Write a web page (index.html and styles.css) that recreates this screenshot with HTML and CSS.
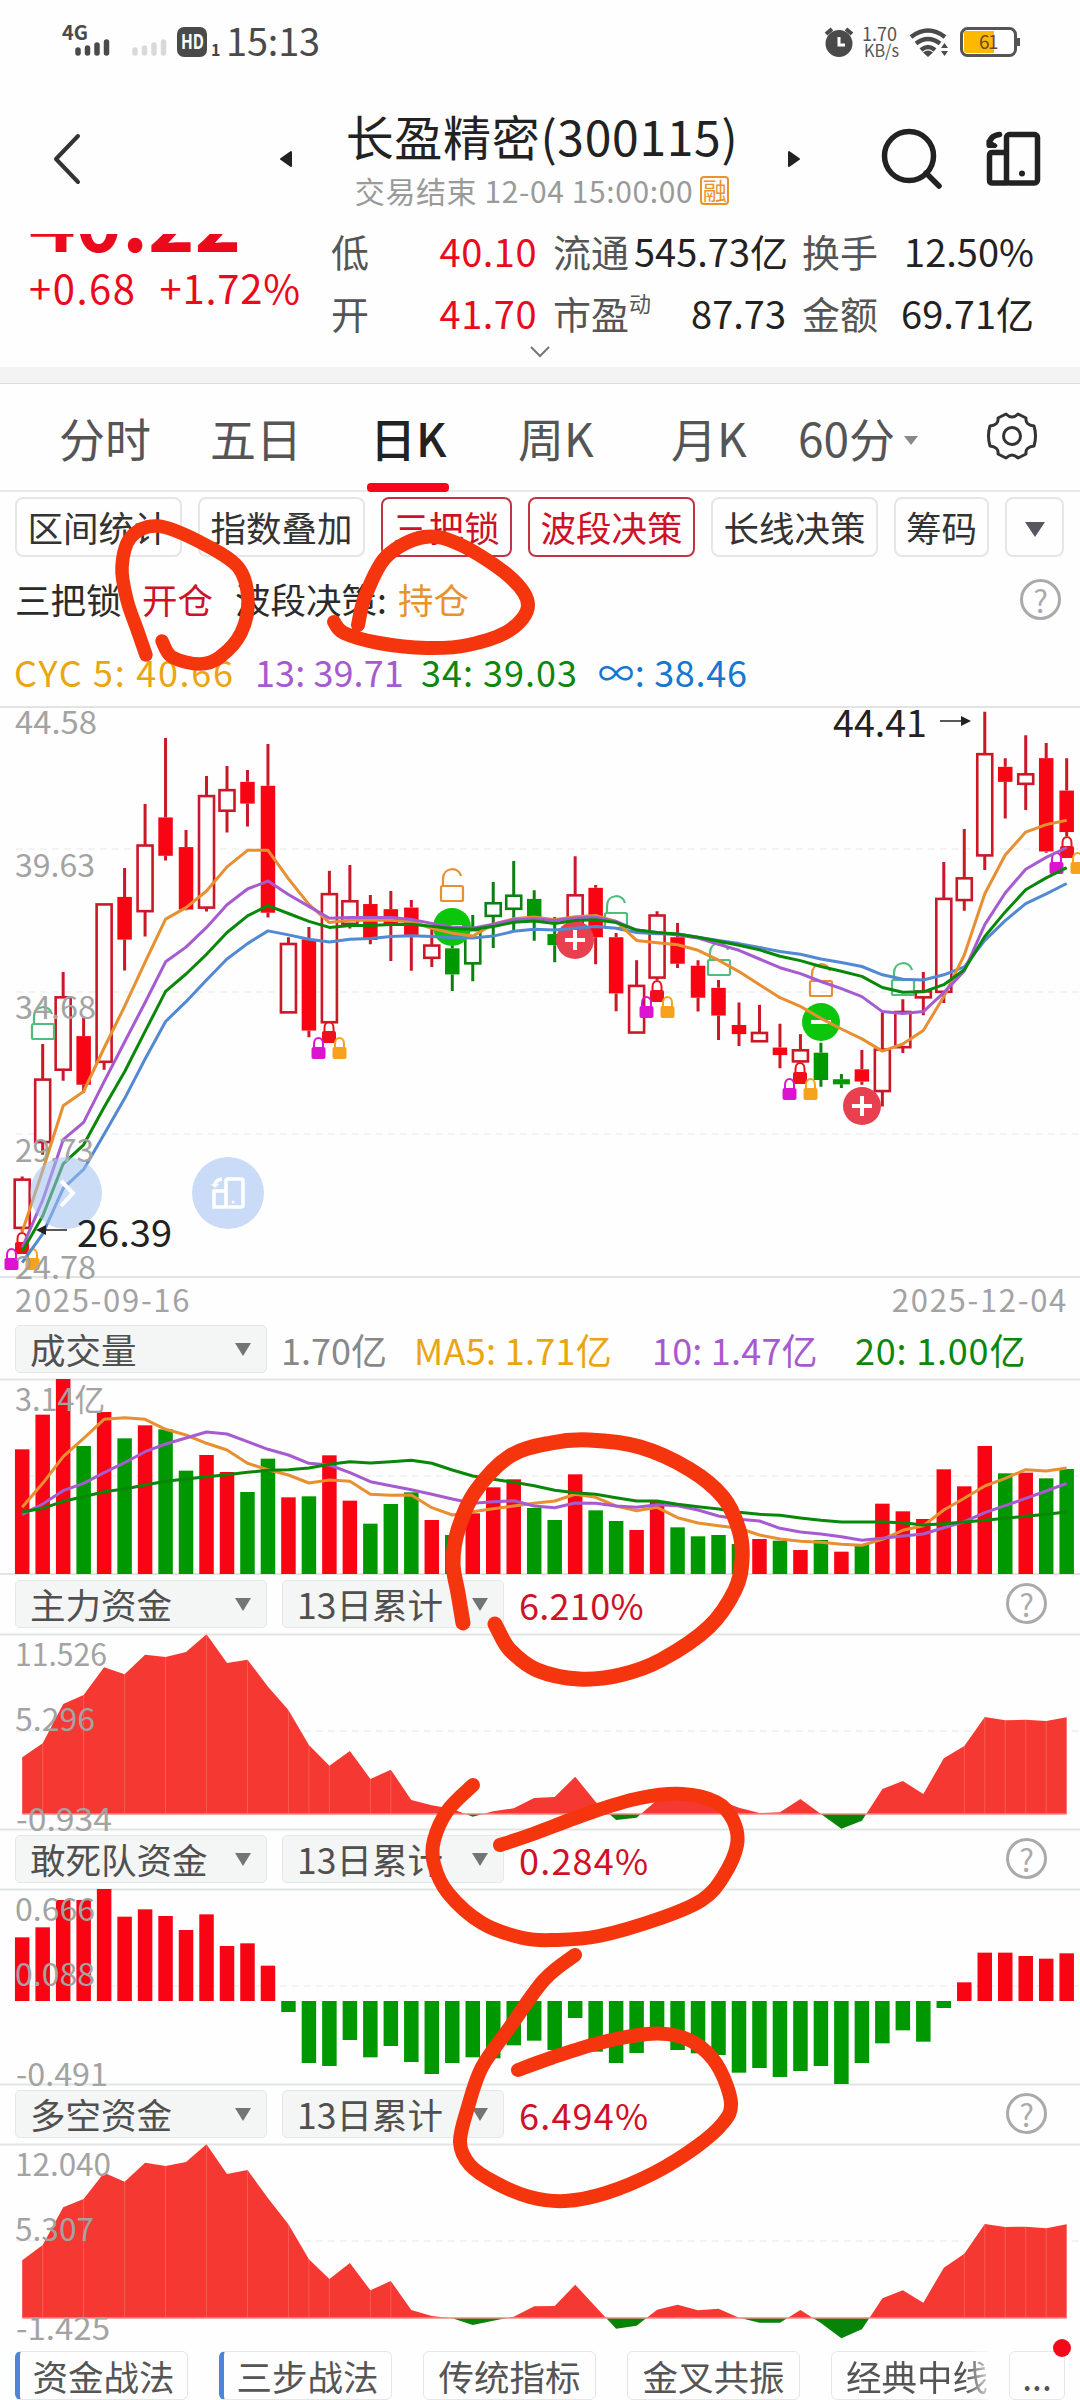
FILE: index.html
```html
<!DOCTYPE html>
<html lang="zh-CN">
<head>
<meta charset="utf-8">
<title>长盈精密(300115)</title>
<link rel="stylesheet" href="styles.css">
</head>
<body>
<div class="screen">
  <div class="status">
    <svg class="status-left" width="226" height="80" viewBox="0 0 226 80">
      <text x="62" y="40" class="net" textLength="26" lengthAdjust="spacingAndGlyphs">4G</text>
      <g stroke="#4a4a4a" stroke-width="5.5" stroke-linecap="round"><path d="M78 50v3M87.5 48v5M97 45v8M106.500 42v11"/></g>
      <g stroke="#d9d9d9" stroke-width="5.5" stroke-linecap="round"><path d="M135 50v3M144.500 48v5M154 45v8M163.500 42v11"/></g>
      <rect x="177" y="27" width="30" height="30" rx="7" fill="#4a4a4a"/>
      <text x="181" y="49" class="hd" textLength="23" lengthAdjust="spacingAndGlyphs">HD</text>
      <text x="211" y="56" class="sim">1</text>
    </svg>
    <span class="clock">15:13</span>
    <svg class="status-right" width="220" height="80" viewBox="820 0 220 80">
      <circle cx="839" cy="43.500" r="13.500" fill="#4a4a4a"/><path d="M826 34l6-5M852 34l-6-5" stroke="#4a4a4a" stroke-width="4"/><path d="M839 37v8h6" stroke="#fff" stroke-width="3" fill="none"/>
      <text x="862" y="41" class="speed" textLength="35" lengthAdjust="spacingAndGlyphs">1.70</text>
      <text x="864" y="57" class="speed kb" textLength="35" lengthAdjust="spacingAndGlyphs">KB/s</text>
      <g fill="none" stroke="#4a4a4a" stroke-width="4.500"><path d="M911 37q17-13 34 0M916 43.500q12-9 24 0M921 50q7-6 14 0"/></g>
      <path d="M923 52.500q5-4 10 0l-5 4.500zM941 48l3.500-5 3.500 5zM941 51l3.500 5 3.500-5z" fill="#4a4a4a"/>
      <rect x="961.500" y="28.500" width="54" height="27" rx="6" fill="#fff" stroke="#555" stroke-width="3"/>
      <path d="M964 31h30v22h-27q-3 0-3-3z" fill="#fcb900"/><path d="M1018.500 38v8" stroke="#555" stroke-width="3"/>
      <text x="979" y="49" class="batt">61</text>
    </svg>
  </div>

  <header class="head">
    <svg class="back" width="30" height="54" viewBox="0 0 30 54"><path d="M26 4L4 27l22 23" fill="none" stroke="#333" stroke-width="4" stroke-linecap="round" stroke-linejoin="round"/></svg>
    <svg class="prev" width="14" height="18" viewBox="0 0 14 18"><path d="M12 2v14L2 9z" fill="#222" stroke="#222" stroke-width="2" stroke-linejoin="round"/></svg>
    <div class="titles">
      <h1>长盈精密(300115)</h1>
      <div class="sub"><span>交易结束 12-04 15:00:00</span><b>融</b></div>
    </div>
    <svg class="next" width="14" height="18" viewBox="0 0 14 18"><path d="M2 2v14l10-7z" fill="#222" stroke="#222" stroke-width="2" stroke-linejoin="round"/></svg>
    <svg class="search" width="64" height="64" viewBox="0 0 64 64"><circle cx="28" cy="28" r="24.500" fill="none" stroke="#222" stroke-width="5.500"/><path d="M45 45l13 13" stroke="#222" stroke-width="5.500" stroke-linecap="round"/></svg>
    <svg class="rotate" width="56" height="56" viewBox="0 0 56 56"><g fill="none" stroke="#222" stroke-width="5.500"><rect x="20.500" y="3.500" width="31" height="48.500" rx="3"/><path d="M20 21.500H6.500q-3 0-3 3v24.500q0 3 3 3h14M3.500 13q0-8 10-9.500" stroke-linecap="round"/></g><path d="M1 9v6q0 1.500 1.500 1.500h7q3-1 .5-3.500z" fill="#222" stroke="#222"/><circle cx="36" cy="42.500" r="3" fill="#222"/></svg>
  </header>

  <section class="quote">
    <div class="last">
      <div class="price">40.22</div>
      <div class="chg"><span>+0.68</span><span>+1.72%</span></div>
    </div>
    <div class="facts">
      <span>低</span><b class="red">40.10</b><span>流通</span><b>545.73亿</b><span>换手</span><b>12.50%</b>
      <span>开</span><b class="red">41.70</b><span>市盈<sup>动</sup></span><b>87.73</b><span>金额</span><b>69.71亿</b>
    </div>
    <svg class="more" width="22" height="14" viewBox="0 0 22 14"><path d="M2 2l9 9 9-9" fill="none" stroke="#777" stroke-width="2"/></svg>
  </section>

  <nav class="tabs">
    <span>分时</span><span>五日</span><span class="on">日K</span><span>周K</span><span>月K</span><span>60分<i></i></span>
    <svg width="50" height="50" viewBox="-25 -25 50 50" fill="none" stroke="#333" stroke-width="3" stroke-linejoin="round"><path d="M-6-22Q0-16 6-22L14-18Q13-11 22-10Q25 0 22 10Q13 11 14 18L6 22Q0 16-6 22L-14 18Q-13 11-22 10Q-25 0-22-10Q-13-11-14-18Z"/><circle r="8.500"/></svg>
  </nav>

  <div class="chips">
    <span class="w4">区间统计</span><span class="w4">指数叠加</span><span class="w3 on">三把锁</span><span class="w4 on">波段决策</span><span class="w4">长线决策</span><span class="w2">筹码</span><span class="w1"><i></i></span>
  </div>

  <div class="signals">
    <span>三把锁:</span><span class="crimson">开仓</span><span>波段决策:</span><span class="orange">持仓</span><em class="help">?</em>
  </div>
  <div class="cyc"><span class="gold">CYC 5: 40.66</span><span class="purple">13: 39.71</span><span class="green">34: 39.03</span><span class="blue">∞: 38.46</span></div>

  <svg class="chart main" id="kline" viewBox="0 706 1080 572"></svg>
  <div class="dates"><span>2025-09-16</span><span>2025-12-04</span></div>

  <div class="picker volrow"><span class="sel">成交量<i></i></span><span class="g">1.70亿</span><span class="gold">MA5: 1.71亿</span><span class="purple">10: 1.47亿</span><span class="green">20: 1.00亿</span></div>
  <svg class="chart" id="volume" viewBox="0 1379 1080 195"></svg>

  <div class="picker"><span class="sel">主力资金<i></i></span><span class="sel per">13日累计<i></i></span><span class="crimson">6.210%</span><em class="help">?</em></div>
  <svg class="chart" id="mainfund" viewBox="0 1634 1080 195"></svg>

  <div class="picker"><span class="sel">敢死队资金<i></i></span><span class="sel per">13日累计<i></i></span><span class="crimson wide">0.284%</span><em class="help">?</em></div>
  <svg class="chart" id="daredevil" viewBox="0 1889 1080 195"></svg>

  <div class="picker"><span class="sel">多空资金<i></i></span><span class="sel per">13日累计<i></i></span><span class="crimson wide">6.494%</span><em class="help">?</em></div>
  <svg class="chart last-chart" id="longshort" viewBox="0 2144 1080 195"></svg>

  <footer class="foot">
    <span class="mark">资金战法</span><span class="mark">三步战法</span><span>传统指标</span><span>金叉共振</span><span class="cut">经典中线</span><span class="dots">...<i class="dot"></i></span>
  </footer>

  <svg class="ink" id="ink" viewBox="0 0 1080 2400"></svg>
</div>
<script src="charts.js"></script>
</body>
</html>
```
FILE: styles.css
```css
* { box-sizing: border-box; }
body { margin: 0; background: #fefefe; font-family: "Noto Sans CJK SC", sans-serif; color: #2b2b2b; }
.screen { position: relative; width: 1080px; height: 2400px; overflow: hidden; background: #fefefe; }
i, em { font-style: normal; }
.red { color: #ea0a1c !important; }
.crimson { color: #cf1127; }
.orange { color: #ea922b; }
.gold { color: #eaa612; }
.purple { color: #a75ad0; }
.green { color: #0c860c; }
.blue { color: #1677d2; }

.status { display: flex; height: 80px; align-items: center; }
.clock { width: 562px; font-size: 38px; line-height: 82px; color: #4a4a4a; letter-spacing: -.2px; }
.status-right { margin-left: 32px; }
.net { font-size: 20px; font-weight: 700; fill: #4a4a4a; }
.hd { font-size: 20px; font-weight: 700; fill: #fff; }
.sim { font-size: 16px; font-weight: 700; fill: #444; }
.speed { font-size: 19px; fill: #555; }
.kb { font-size: 17px; }
.batt { font-size: 19px; letter-spacing: -1.500px; fill: #6b4a1c; }

.head { display: flex; height: 154px; align-items: flex-start; padding-left: 52px; }
.back { margin-top: 52px; }
.prev { margin: 70px 0 0 197px; }
.titles { width: 430px; margin: 0 30px 0 34px; padding-top: 25px; display: flex; flex-direction: column; align-items: center; }
h1 { margin: 0; font-size: 48px; line-height: 60px; font-weight: 400; letter-spacing: .7px; white-space: nowrap; color: #222; }
.sub { display: flex; align-items: center; gap: 7px; font-size: 30px; line-height: 40px; margin-top: 5px; color: #9a9a9a; white-space: nowrap; letter-spacing: .6px; }
.sub b { width: 29px; height: 29px; border: 2px solid #ea922b; border-radius: 4px; font-size: 24px; line-height: 24px; font-weight: 400; letter-spacing: 0; color: #ea922b; text-align: center; }
.next { margin-top: 70px; }
.search { margin: 48px 0 0 80px; }
.rotate { margin: 51px 0 0 41px; }

.quote { position: relative; display: flex; height: 133px; overflow: hidden; padding-left: 29px; }
.last { width: 302px; color: #ea0a1c; }
.price { height: 32px; margin-top: -76px; font-size: 79px; line-height: 120px; font-weight: 700; }
.chg { display: flex; gap: 23px; margin-top: 73px; font-size: 40px; line-height: 48px; letter-spacing: 1.500px; white-space: nowrap; }
.chg span + span { letter-spacing: .8px; }
.facts { display: grid; grid-template-columns: 85px 121px 97px 152px 97px 151px; grid-auto-rows: 62px; margin-top: -14px; font-size: 38px; line-height: 62px; color: #555; white-space: nowrap; }
.facts b { font-weight: 400; color: #222; text-align: right; }
.facts b.red { letter-spacing: .5px; }
.facts span:nth-child(6n+3), .facts span:nth-child(6n+5) { padding-left: 16px; }
sup { font-size: 22px; line-height: 0; vertical-align: 17px; }
.more { position: absolute; left: 529px; top: 111px; }

.tabs { display: grid; grid-template-columns: 151px 160px 148px 153px 127px 182px auto; height: 125px; padding-left: 59px; border-top: 16px solid #f3f3f3; border-bottom: 2px solid #e9e9e9; box-shadow: inset 0 1px #ddd; font-size: 46px; line-height: 109px; color: #555; }
.tabs span { position: relative; white-space: nowrap; }
.tabs .on { color: #222; font-weight: 500; }
.tabs .on::after { content: ""; position: absolute; left: -3px; bottom: 0; width: 82px; height: 9px; border-radius: 4px; background: #f4081a; }
.tabs i { display: inline-block; margin-left: 9px; border: 7px solid transparent; border-top: 9px solid #888; border-bottom: 0; vertical-align: 12px; }
.tabs svg { margin: 28px 0 0 7px; }

.chips { display: flex; gap: 16px; height: 65px; padding: 5px 0 0 15px; font-size: 35.500px; }
.chips span { height: 60px; border: 2px solid #e5e6e8; border-radius: 8px; line-height: 55px; text-align: center; white-space: nowrap; color: #333; }
.chips .w4 { width: 167px; } .chips .w3 { width: 131px; } .chips .w2 { width: 95px; } .chips .w1 { width: 59px; }
.chips .on { border-color: #c23444; color: #cf1127; }
.chips i { display: inline-block; border: 10px solid transparent; border-top: 15px solid #555861; border-bottom: 0; vertical-align: 5px; }

.signals { display: grid; grid-template-columns: 127px 93px 163px 643px auto; height: 84px; padding-left: 15px; font-size: 35.500px; line-height: 84px; white-space: nowrap; }
.help { display: block; width: 41px; height: 41px; border: 3px solid #aaa; border-radius: 50%; font-size: 31px; line-height: 35px; text-align: center; color: #aaa; }
.signals .help { margin: 22px 0 0 -21px; }
.cyc { display: grid; grid-template-columns: 241px 166px 177px auto; height: 65px; padding-left: 14px; font-size: 36px; line-height: 60px; white-space: nowrap; }
.cyc .gold { letter-spacing: 1.700px; } .cyc .purple { letter-spacing: .1px; } .cyc .green { letter-spacing: 1px; } .cyc .blue { letter-spacing: .7px; }

.chart { display: block; width: 1080px; height: 195px; overflow: visible; }
.chart.main { height: 572px; }
.chart text { font-family: "Noto Sans CJK SC", sans-serif; }
.axis { font-size: 31px; fill: #a3a3a3; }
.mark-price { font-size: 37px; fill: #222; }
.dates { display: flex; justify-content: space-between; height: 47px; padding: 0 12px 0 15px; font-size: 31px; line-height: 41px; letter-spacing: 1.700px; color: #a3a3a3; }

.picker { display: flex; height: 60px; padding: 6px 33px 0 15px; font-size: 36px; line-height: 48px; white-space: nowrap; }
.volrow { height: 54px; padding-top: 0; }
.sel { position: relative; width: 252px; height: 48px; padding-left: 14px; border: 1px solid #e6e7e8; border-radius: 5px; background: #f4f5f5; font-size: 35.500px; line-height: 46px; color: #505050; }
.sel i { position: absolute; right: 15px; top: 17px; border: 8px solid transparent; border-top: 13px solid #747474; border-bottom: 0; }
.per { width: 222px; margin-left: 15px; padding-left: 14px; }
.picker .crimson { margin-left: 15px; letter-spacing: .3px; }
.picker .wide { letter-spacing: 1.200px; }
.picker .help { margin: 3px 0 0 auto; }
.volrow .g { width: 133px; margin-left: 14px; color: #888; }
.volrow .gold { width: 238px; letter-spacing: .3px; } .volrow .purple { width: 203px; letter-spacing: .2px; }
.volrow .green { letter-spacing: .8px; }

.foot { display: flex; height: 61px; padding: 12px 0 0 15px; font-size: 35.500px; line-height: 48px; color: #555; white-space: nowrap; }
.foot span { width: 173px; height: 49px; margin-right: 31px; border: 1px solid #e6e6e6; border-radius: 6px; text-align: center; }
.foot .mark { border-left: 5px solid #4d86d8; }
.foot .cut { width: 158px; margin-right: 20px; border-right: 0; border-radius: 6px 0 0 6px; overflow: hidden; padding-left: 14px; text-align: left; -webkit-mask-image: linear-gradient(90deg, #000 85%, transparent 105%); mask-image: linear-gradient(90deg, #000 85%, transparent 105%); }
.foot .dots { position: relative; width: 56px; margin-right: 0; }
.dot { position: absolute; right: -7px; top: -13px; width: 18px; height: 18px; border-radius: 50%; background: #f4081a; }
.ink { position: absolute; left: 0; top: 0; width: 1080px; height: 2400px; pointer-events: none; }
```
FILE: charts.js
```js
const RED = '#f90413', DRED = '#cb1828', GRN = '#009800', DGRN = '#0c8010';
const OR = '#e78f31', PU = '#a65bd0', GR = '#098709', BL = '#5189d3';
const X = i => 22.2 + 20.480 * i;
const put = (id, s) => { document.getElementById(id).innerHTML = s; };
const rule = (y, w = 1080) => `<path d="M0 ${y}H${w}" stroke="#e2e4e4" stroke-width="2"/>`;
const dash = y => `<path d="M16 ${y}H1080" stroke="#f0f0f0" stroke-width="1.500" stroke-dasharray="7 5"/>`;
const label = (t, x, y, w, c = 'axis') => `<text class="${c}" x="${x - 1}" y="${y + 1}" textLength="${w + 2}" lengthAdjust="spacingAndGlyphs">${t}</text>`;
const line = (v, c, f) => `<polyline fill="none" stroke="${c}" stroke-width="3" stroke-linejoin="round" points="${v.map((n, i) => X(i).toFixed(1) + ',' + f(n).toFixed(1)).join(' ')}"/>`;

/* Daily candles: kind (h hollow / f filled, capital = green), high, body top, body bottom, low */
const K = [
['h',1205,1213,1335,1345],['h',870,960,1118,1150],['h',688,752,935,963],['f',803,850,973,993],['h',515,517,915,935],
['f',425,498,606,684],['h',263,368,534,598],['f',96,297,394,406],['f',329,372,530,532],['h',192,243,525,535],
['h',167,228,280,335],['f',177,207,262,320],['f',111,217,538,550],['h',600,617,790,790],['f',574,605,836,853],
['h',432,491,815,815],['h',417,509,566,578],['f',493,516,607,618],['f',483,529,568,660],['f',506,525,596,685],
['h',570,621,652,675],['F',620,628,694,736],['H',544,582,666,711],['H',460,514,546,627],['H',407,495,528,585],
['F',481,503,550,609],['F',549,592,620,663],['h',395,494,585,600],['f',468,475,600,668],['f',589,600,742,787],
['h',658,723,841,841],['h',534,545,702,708],['f',564,600,667,678],['f',658,672,753,788],['f',708,728,798,860],
['f',765,822,845,875],['h',771,842,863,863],['f',819,879,898,931],['h',845,886,914,914],['F',867,892,961,978],
['F',946,959,972,981],['f',885,934,965,973],['h',790,884,989,1028],['h',757,789,878,893],['h',688,737,752,797],
['h',410,503,738,766],['h',326,451,506,533],['h',30,137,393,430],['f',147,169,207,300],['h',89,188,212,278],
['f',109,147,383,386],['f',147,229,334,344]];
const ky = v => 700 + v / 2.529;
let s = rule(707) + dash(849) + dash(992) + dash(1134) + rule(1277);
K.forEach(([k, hi, t, b, lo], i) => {
  const x = X(i), up = k === k.toLowerCase(), st = up ? DRED : DGRN, h = k.toLowerCase() === 'h';
  s += `<path d="M${x} ${ky(hi)}V${ky(t)}M${x} ${ky(b)}V${ky(lo)}" stroke="${st}" stroke-width="3"/>`;
  const w = i === 40 ? 17 : h ? 15 : 14.5;
  s += h ? `<rect x="${x - 7.5}" y="${ky(t)}" width="15" height="${ky(b) - ky(t)}" fill="#fefefe" stroke="${st}" stroke-width="2.600"/>`
         : `<rect x="${x - w / 2}" y="${ky(t)}" width="${w}" height="${ky(b) - ky(t)}" fill="${up ? RED : GRN}"/>`;
});
const openLock = (x, y, c) => `<g fill="none" stroke="${c}" stroke-width="2.200"><rect x="${x - 11}" y="${y}" width="22" height="15" rx="1.500"/><path d="M${x - 9} ${y}v-7c0-12 16-13 18-3"/></g>`;
const lock = (x, y, c) => `<path d="M${x - 4.500} ${y}v-4c0-8 9-8 9 0v4" fill="none" stroke="${c}" stroke-width="2"/><rect x="${x - 7}" y="${y - 1}" width="14" height="12" rx="2" fill="${c}"/>`;
const trio = (x, y) => lock(x, y, '#f0101c') + lock(x - 10.500, y + 16, '#dc14d0') + lock(x + 10.500, y + 16, '#f6a21d');
const sign = (x, y, c, plus) => `<circle cx="${x}" cy="${y}" r="19" fill="${c}"/><path d="M${x - 10} ${y}h20${plus ? `M${x} ${y - 10}v20` : ''}" stroke="#fff" stroke-width="4"/>`;
const G = '#4fbd7b';
s += openLock(43, 1024, G) + openLock(452, 886, OR) + openLock(616, 913, G) + openLock(719, 960, G) + openLock(821, 981, OR) + openLock(903, 980, G);
s += sign(452, 927, '#0cc60c') + sign(821, 1022, '#0cc60c') + sign(575, 940, '#e8404f', 1) + sign(862, 1106, '#e8404f', 1);
s += trio(22, 1243) + trio(329, 1032) + trio(657, 991) + trio(800, 1073) + trio(1067, 847);
s += line([1423,1350,1235,1187,1098,1008,908,813,763,708,655,616,584,594,605,612,605,603,598,596,598,601,602,597,585,580,582,577,573,577,588,591,592,600,608,616,626,636,643,655,664,674,695,706,708,695,675,608,558,515,490,464], BL, ky);
s += line([1345,1190,1026,990,880,775,663,554,525,483,422,380,380,452,517,563,557,557,557,561,577,590,597,567,553,549,556,548,545,560,608,614,619,633,658,687,720,753,775,805,832,857,888,870,836,750,645,490,392,334,315,304], OR, ky);
s += line([1385,1265,1112,1068,965,865,765,662,625,575,518,478,458,492,522,552,550,550,550,555,565,574,577,567,556,553,558,551,549,560,582,588,594,602,618,633,655,677,692,712,730,750,788,793,788,740,685,568,488,428,398,373], PU, ky);
s += line([1395,1305,1173,1125,1030,940,838,737,693,643,588,546,520,540,560,575,570,570,568,567,572,578,580,573,562,559,565,558,556,563,582,588,592,600,610,620,632,648,659,674,686,699,727,739,738,720,682,598,536,480,450,424], GR, ky);
s += label('44.58', 16, 733, 80) + label('39.63', 16, 876, 78) + label('34.68', 16, 1018, 79) + label('29.73', 16, 1161, 77) + label('24.78', 16, 1278, 79);
s += '<circle cx="66" cy="1193" r="36" fill="#9fbfef" fill-opacity=".55"/><circle cx="228" cy="1193" r="36" fill="#c9dbf7"/>';
s += '<path d="M61 1181l12 12-12 13" fill="none" stroke="#fff" stroke-width="4"/>';
s += '<g fill="none" stroke="#fff" stroke-width="3.500"><rect x="226" y="1179" width="17" height="28" rx="2"/><path d="M226 1191h-12v16h12M215 1186q0-6 7-7"/></g><path d="M211 1184l4 4 4-4z" fill="#fff"/><circle cx="233" cy="1202" r="1.500" fill="#fff"/>';
s += label('26.39', 78, 1246, 93, 'mark-price') + '<path d="M40 1230H67" stroke="#222" stroke-width="1.500"/><path d="M36 1230l10-5v10z" fill="#222"/>';
s += label('44.41', 834, 736, 92, 'mark-price') + '<path d="M940 721H964" stroke="#222" stroke-width="1.500"/><path d="M971 721l-10-5v10z" fill="#222"/>';
put('kline', s);

/* Volume */
const V = [418,314,207,408,306,385,346,358,482,435,486,546,446,562,559,436,572,641,582,547,630,675,610,532,508,594,630,493,601,633,660,574,652,679,675,702,687,692,720,690,725,703,581,604,627,478,529,408,490,488,505,477];
const VC = 'rrrgrgrggrrggrgrrgggrgrrrggrggrrggggrgrgrgrrrrrrgrgg';
const vy = v => 1310 + v / 3;
s = rule(1379.500) + dash(1476) + rule(1574);
V.forEach((v, i) => { s += `<rect x="${X(i) - 7.25}" y="${vy(v)}" width="14.500" height="${1574 - vy(v)}" fill="${VC[i] === 'r' ? RED : GRN}"/>`; });
s += line([592,520,440,385,328,323,328,358,375,400,420,460,479,495,519,510,514,553,556,555,593,615,605,596,588,580,573,553,562,588,602,592,623,639,647,655,675,687,694,697,703,706,688,661,647,600,565,528,505,479,483,474], OR, vy);
s += line([613,582,542,520,488,458,425,402,384,366,372,395,418,435,460,465,488,515,527,539,553,567,580,575,572,588,593,579,580,588,592,584,587,600,618,628,633,655,666,672,680,691,685,678,672,653,635,608,587,565,543,520], PU, vy);
s += line([606,595,574,560,545,537,525,514,507,500,494,487,481,479,474,463,455,459,455,451,460,480,498,508,517,527,541,548,553,563,573,573,583,590,597,607,613,616,624,631,636,636,636,638,645,641,636,631,625,619,613,606], GR, vy);
put('volume', s + label('3.14亿', 16, 1410, 88));

/* Fund-flow areas: red above the zero line, green below */
function area(id, top, off, base, v, labels, bottom) {
  const pts = v.map((n, i) => `${X(i).toFixed(1)},${(off + n / 3).toFixed(1)}`).join(' ');
  const shape = `${X(0)},${base} ${pts} ${X(51)},${base}`;
  let o = rule(top + .5) + dash(top + 97) + (bottom ? rule(bottom) : '');
  o += `<clipPath id="${id}a"><rect x="0" y="${top - 2}" width="1080" height="${base - top + 2}"/></clipPath><clipPath id="${id}b"><rect x="0" y="${base}" width="1080" height="24"/></clipPath>`;
  o += `<polygon points="${shape}" fill="#f53932" clip-path="url(#${id}a)"/><polygon points="${shape}" fill="#078307" clip-path="url(#${id}b)"/>`;
  [1,3,5,7,9,11,13,14,15,17,18,46,47,48,49,50].forEach(i => { o += `<path d="M${X(i)} ${off + v[i] / 3}V${base}" stroke="#fff" stroke-opacity=".18"/>`; });
  o += `<path d="M${X(0)} ${base}H${X(51)}" stroke="#f58a84" stroke-width="1.500"/>`;
  put(id, o + labels);
}
area('mainfund', 1634, 1620, 1814, [412,370,252,225,142,163,104,111,96,43,129,119,200,270,375,437,393,477,449,540,556,567,590,574,565,534,531,470,545,600,593,540,535,540,540,563,579,577,537,582,626,602,507,483,522,415,378,291,301,299,303,292],
  label('11.526', 16, 1665, 90) + label('5.296', 16, 1730, 78) + label('-0.934', 17, 1830, 94), 1829.500);
area('longshort', 2144, 2080, 2318, [541,495,382,357,278,305,248,258,246,193,282,270,355,433,538,597,549,631,603,690,708,715,735,722,710,679,678,614,680,746,737,689,674,691,686,713,728,728,690,729,775,748,655,631,668,563,521,432,441,440,445,433],
  label('12.040', 16, 2175, 94) + label('5.307', 16, 2240, 77) + label('-1.425', 17, 2339, 92));

/* Daredevil fund bars around the zero line */
const D = [352,322,240,240,207,290,268,288,330,283,378,370,437,576,729,738,660,712,678,726,762,729,712,715,676,662,690,594,695,729,699,660,690,700,705,758,744,771,753,738,792,729,670,631,665,564,487,398,398,408,416,400];
s = rule(1889.500) + dash(1986) + rule(2084.500);
D.forEach((v, i) => { const y = 1820 + v / 3, z = 2001; s += `<rect x="${X(i) - 7.25}" y="${Math.min(y, z)}" width="14.500" height="${Math.abs(z - y)}" fill="${v < 543 ? RED : GRN}"/>`; });
put('daredevil', s + label('0.666', 16, 1920, 78) + label('0.088', 16, 1985, 78) + label('-0.491', 17, 2085, 90));

/* Freehand marker circles */
const strokes = [
[13.5,[146,655],[138,632],[127,600],[122,567],[131,537],[158,526],[200,542],[238,567],[248,600],[241,633],[220,657],[200,664],[172,657],[162,641]],
[14,[358,625],[365,597],[386,557],[424,537],[461,545],[510,577],[528,605],[510,630],[468,645],[427,648],[379,643],[344,633],[334,622]],
[15,[463,1623],[458,1593],[453,1563],[458,1530],[475,1492],[510,1456],[551,1443],[589,1440],[640,1447],[689,1469],[723,1497],[739,1530],[742,1560],[735,1590],[709,1627],[661,1660],[620,1675],[579,1679],[537,1670],[510,1650],[498,1630],[495,1624]],
[14,[473,1785],[448,1810],[434,1840],[434,1864],[448,1893],[482,1923],[523,1938],[554,1940],[599,1936],[661,1918],[702,1900],[723,1877],[737,1845],[733,1820],[716,1802],[682,1794],[640,1798],[592,1812],[530,1835],[500,1845]],
[14,[575,1955],[544,1980],[510,2027],[482,2067],[468,2107],[460,2142],[470,2165],[496,2183],[530,2197],[565,2201],[606,2193],[654,2173],[696,2147],[723,2123],[731,2103],[720,2070],[702,2048],[678,2036],[647,2034],[599,2043],[551,2058],[518,2070]]];
put('ink', strokes.map(([w, ...p]) => {
  let d = `M${p[0]}`;
  for (let i = 0; i < p.length - 1; i++) {
    const a = p[i - 1] || p[i], b = p[i], c = p[i + 1], e = p[i + 2] || c;
    d += `C${b[0] + (c[0] - a[0]) / 6} ${b[1] + (c[1] - a[1]) / 6} ${c[0] - (e[0] - b[0]) / 6} ${c[1] - (e[1] - b[1]) / 6} ${c[0]} ${c[1]}`;
  }
  return `<path d="${d}" fill="none" stroke="#f5350e" stroke-width="${w}" stroke-linecap="round" stroke-linejoin="round"/>`;
}).join(''));
```
